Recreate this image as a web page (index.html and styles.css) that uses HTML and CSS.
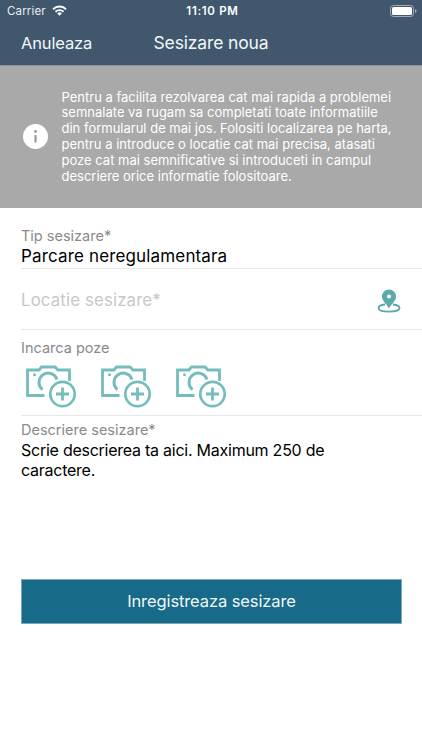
FILE: index.html
```html
<!DOCTYPE html>
<html lang="ro">
<head>
<meta charset="utf-8">
<title>Sesizare noua</title>
<link rel="stylesheet" href="styles.css">
</head>
<body>
<svg class="defs" aria-hidden="true">
  <symbol id="camera" viewBox="0 0 52 44">
    <g fill="none" stroke="#75bdbd" stroke-width="2.800">
      <path d="M19.500 31.500H2.500V6h11.500l2.500-3h13.500l3 3h11.500V17"/>
      <path d="M17.500 25.500A9.200 9.200 0 1 1 32 15.500" stroke-width="3"/>
      <circle cx="37.500" cy="30" r="12.200" stroke-width="2.700"/>
      <path d="M31 30h13M37.500 23.500v13"/>
    </g>
    <circle cx="9.500" cy="10.800" r="1.500" fill="#75bdbd"/>
  </symbol>
</svg>
<header class="header">
  <div class="status">
    <div class="carrier"><span>Carrier</span>
      <svg class="wifi" viewBox="0 0 15 11"><g fill="none" stroke="#fff" stroke-width="1.900"><path d="M1 4.200a9.300 9.300 0 0 1 13 0"/><path d="M3.500 6.800a5.700 5.700 0 0 1 8 0"/></g><path d="M5.200 8.400a3.300 3.300 0 0 1 4.600 0L7.500 10.800z" fill="#fff"/></svg>
    </div>
    <span class="time">11:10 PM</span>
    <svg class="battery" viewBox="0 0 27 12"><rect x=".5" y=".5" width="23" height="11" rx="3" fill="none" stroke="#a0abb5"/><rect x="2" y="2" width="20" height="8" rx="1.500" fill="#fff"/><path d="M25 4q1.500.6 1.500 2T25 8z" fill="#a0abb5"/></svg>
  </div>
  <nav class="nav"><span class="cancel">Anuleaza</span><h1 class="title">Sesizare noua</h1></nav>
</header>
<section class="info">
  <svg class="info-icon" viewBox="0 0 25 25"><circle cx="12.500" cy="12.500" r="12.500" fill="#fff"/><circle cx="12.500" cy="7.500" r="1.400" fill="#999"/><path d="M12.500 11v7.500" stroke="#999" stroke-width="2.200"/></svg>
  <p class="info-text">Pentru a facilita rezolvarea cat mai rapida a problemei<br>semnalate va rugam sa completati toate informatiile<br>din formularul de mai jos. Folositi localizarea pe harta,<br>pentru a introduce o locatie cat mai precisa, atasati<br>poze cat mai semnificative si introduceti in campul<br>descriere orice informatie folositoare.</p>
</section>
<main class="form">
  <div class="field type"><label class="label">Tip sesizare*</label><div class="value">Parcare neregulamentara</div></div>
  <div class="field location"><span class="placeholder">Locatie sesizare*</span>
    <svg class="pin" viewBox="0 0 24 24"><path d="M8 15.500C4 16 1.500 17.500 1.500 19c0 2.200 4.500 3.600 10.500 3.600S22.500 21.200 22.500 19c0-1.500-2.500-3-6.500-3.500" fill="none" stroke="#5caaa9" stroke-width="1.800"/><path fill-rule="evenodd" d="M12 19.500C10.500 16 4.900 12 4.900 7.500a7.100 7.100 0 0 1 14.200 0C19.100 12 13.500 16 12 19.500zM12 5.600a2 2 0 1 0 0 4 2 2 0 0 0 0-4z" fill="#5caaa9"/></svg>
  </div>
  <div class="field photos"><div class="label">Incarca poze</div>
    <div class="cameras"><svg><use href="#camera"/></svg><svg><use href="#camera"/></svg><svg><use href="#camera"/></svg></div>
  </div>
  <div class="description"><label class="label">Descriere sesizare*</label><div class="value">Scrie descrierea ta aici. Maximum 250 de<br>caractere.</div></div>
  <button class="submit">Inregistreaza sesizare</button>
</main>
</body>
</html>
```
FILE: styles.css
```css
* { box-sizing: border-box; }
body { margin: 0; height: 750px; background: #fff; font-family: Inter, "Liberation Sans", sans-serif; color: #000; overflow: hidden; }
.defs { display: none; }
svg { display: block; }
.header { height: 66px; background: #40576d; color: #fff; border-bottom: 1px solid #8d949d; }
.status { height: 22px; display: grid; grid-template-columns: 1fr auto 1fr; align-items: center; padding: 0 5px 0 7px; }
.carrier { display: flex; align-items: center; gap: 6px; font-size: 11.500px; letter-spacing: .15px; color: #e9edf1; }
.wifi { width: 15px; height: 11px; margin-top: -1px; }
.time { font-size: 11.500px; font-weight: 600; letter-spacing: .7px; margin-left: 1px; }
.battery { width: 27px; height: 12px; justify-self: end; margin-top: -1px; }
.nav { height: 42px; display: grid; grid-template-columns: 1fr auto 1fr; align-items: center; padding: 0 21px; color: #f3f7fa; }
.cancel { font-size: 16.500px; letter-spacing: -.15px; }
.title { margin: 0 0 1px; font-size: 17.500px; font-weight: 400; letter-spacing: -.15px; }
.info { height: 142px; background: #a9a9a9; color: #fff; display: flex; align-items: center; padding-left: 23px; gap: 13.500px; }
.info-icon { width: 25px; height: 25px; flex: none; margin-top: -1px; }
.info-text { margin: 0; font-size: 13px; line-height: 15.800px; white-space: nowrap; }
.form { padding-left: 21px; }
.label { display: block; font-size: 14.500px; line-height: 18px; color: #8a8a8a; }
.value { font-size: 17px; line-height: 20px; white-space: nowrap; }
.field { border-bottom: 1px solid #e7e7e7; }
.type { height: 61px; padding-top: 19px; }
.type .value { line-height: 22px; letter-spacing: .15px; }
.location { height: 61px; display: flex; align-items: center; justify-content: space-between; padding-right: 21px; }
.placeholder { font-size: 16.800px; letter-spacing: .15px; color: #c7c7cb; padding-top: 1px; }
.pin { width: 24px; height: 24px; margin-top: 3px; }
.photos { height: 86px; padding-top: 9px; }
.cameras { display: flex; gap: 23px; padding: 7px 0 0 4px; }
.cameras svg { width: 52px; height: 44px; }
.description { height: 162.500px; padding-top: 5px; }
.description .value { padding-top: 2px; font-size: 16px; line-height: 19.500px; letter-spacing: -.25px; }
.submit { display: block; width: 381px; height: 45px; border: 1px solid #78a9bc; background: #176a88; color: #f0f8fa; font: 16.500px Inter, "Liberation Sans", sans-serif; letter-spacing: -.1px; padding: 0 0 1px; }
```
